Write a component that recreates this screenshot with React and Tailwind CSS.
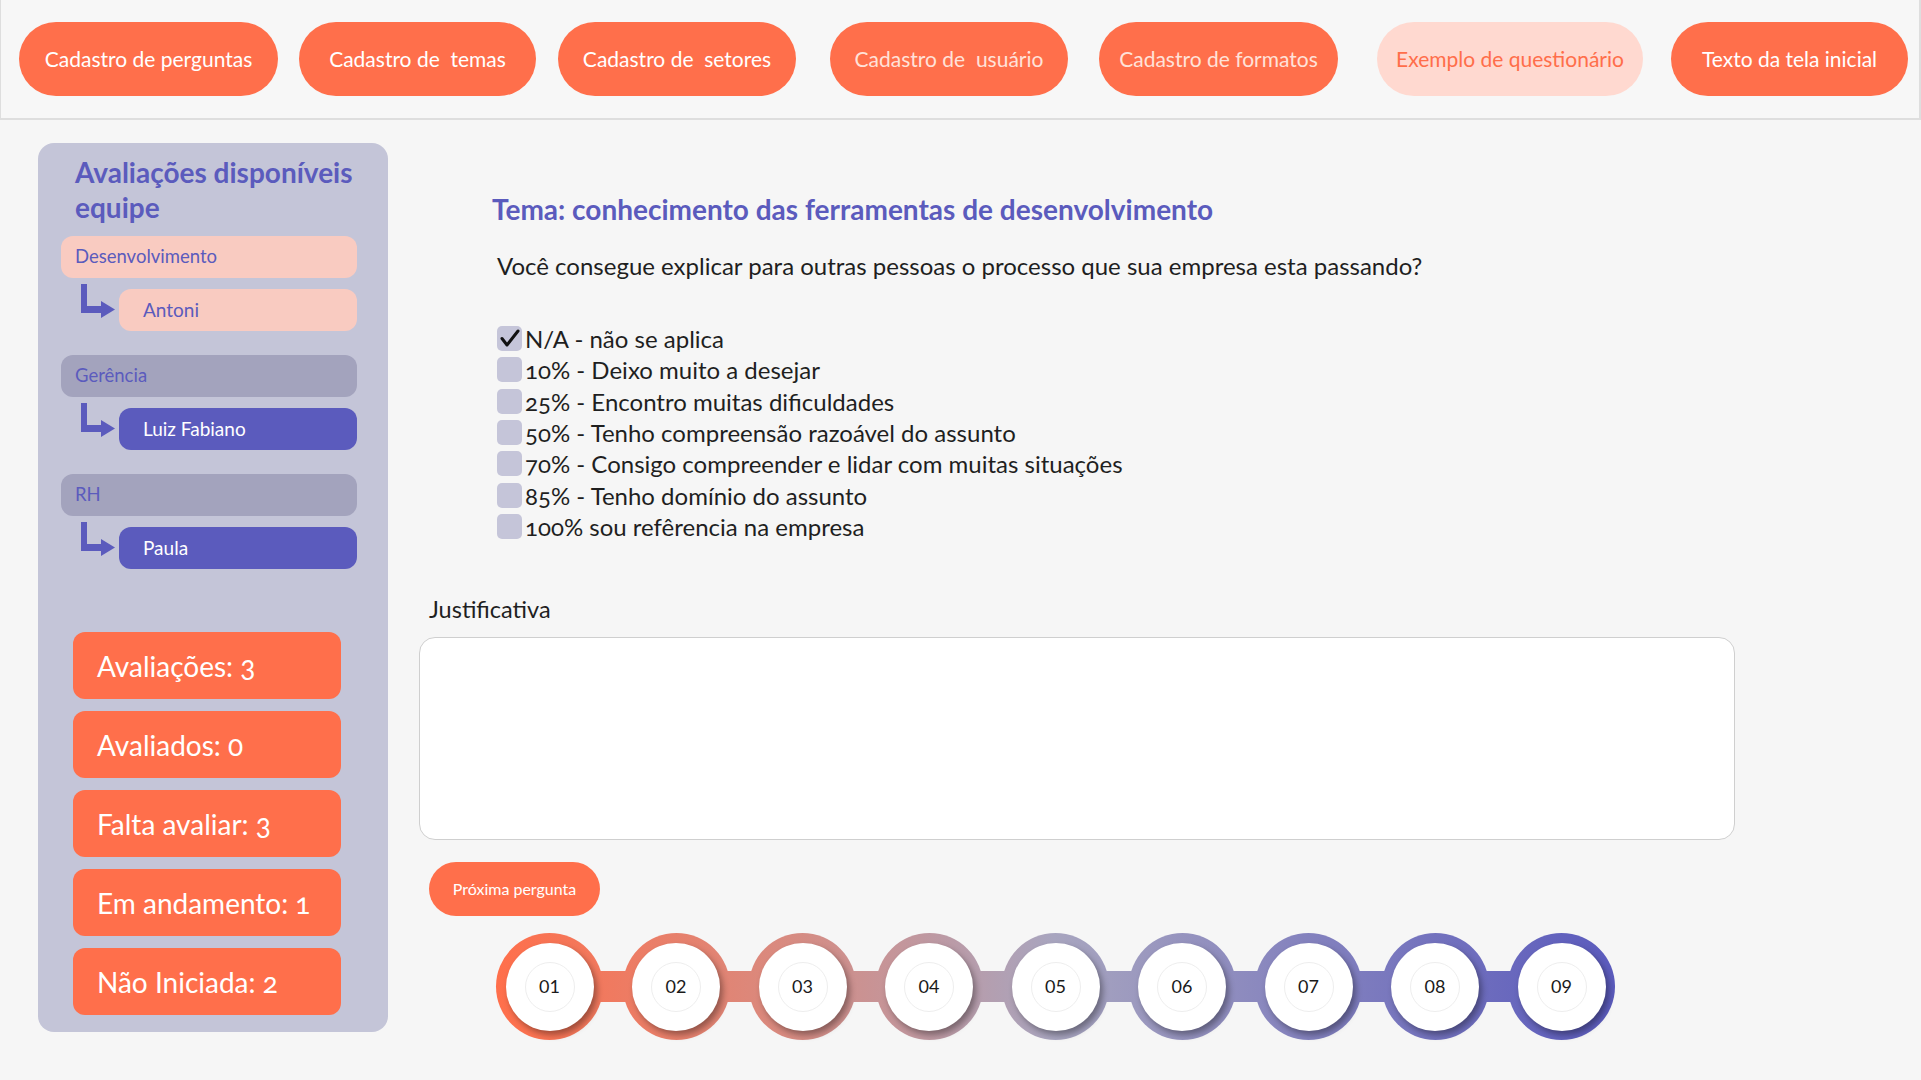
import React from "react";

const FONT = "font-['Lato','Open_Sans',sans-serif]";

const topButtons = [
  { label: "Cadastro de perguntas", w: "w-[259px]", ml: "ml-[18px]", tone: "solid" },
  { label: "Cadastro de  temas", w: "w-[237px]", ml: "ml-[21px]", tone: "solid" },
  { label: "Cadastro de  setores", w: "w-[238px]", ml: "ml-[22px]", tone: "solid" },
  { label: "Cadastro de  usuário", w: "w-[238px]", ml: "ml-[34px]", tone: "soft" },
  { label: "Cadastro de formatos", w: "w-[239px]", ml: "ml-[31px]", tone: "soft" },
  { label: "Exemplo de questionário", w: "w-[266px]", ml: "ml-[39px]", tone: "light" },
  { label: "Texto da tela inicial", w: "w-[237px]", ml: "ml-[28px]", tone: "solid" },
];

const groups = [
  { dept: "Desenvolvimento", person: "Antoni", active: true },
  { dept: "Gerência", person: "Luiz Fabiano", active: false },
  { dept: "RH", person: "Paula", active: false },
];

const stats = [
  "Avaliações: 3",
  "Avaliados: 0",
  "Falta avaliar: 3",
  "Em andamento: 1",
  "Não Iniciada: 2",
];

const options = [
  { label: "N/A - não se aplica", checked: true },
  { label: "10% - Deixo muito a desejar" },
  { label: "25% - Encontro muitas dificuldades" },
  { label: "50% - Tenho compreensão razoável do assunto" },
  { label: "70% - Consigo compreender e lidar com muitas situações" },
  { label: "85% - Tenho domínio do assunto" },
  { label: "100% sou refêrencia na empresa" },
];

const steps = ["01", "02", "03", "04", "05", "06", "07", "08", "09"];

// one gradient shared by the whole chain (fixed to the viewport so it runs across all rings)
const chainBg =
  "bg-fixed bg-[linear-gradient(90deg,#ff6f4b_496px,#d98a7f_780px,#a8a5bf_1054px,#8583be_1300px,#5b5bbd_1615px)]";

export default function App() {
  return (
    <div className={`min-h-screen bg-[#f6f6f6] ${FONT} oldstyle-nums`}>
      {/* ======================
          TOP MENU
      ====================== */}
      <header className="h-[120px] bg-[#f7f7f7] border-l border-r-2 border-b-2 border-[#dedede] flex items-center">
        {topButtons.map((b) => (
          <button
            key={b.label}
            className={`${b.w} ${b.ml} h-[74px] shrink-0 rounded-full text-[21px] whitespace-pre ${
              b.tone === "light"
                ? "bg-[#ffd9d0] text-[#ff6e4a]"
                : b.tone === "soft"
                ? "bg-[#ff6f4b] text-[#ffe2d9]"
                : "bg-[#ff6f4b] text-white"
            }`}
          >
            {b.label}
          </button>
        ))}
      </header>

      <div className="flex pt-[23px]">
        {/* ======================
            SIDEBAR
        ====================== */}
        <aside className="ml-[38px] w-[350px] h-[889px] shrink-0 rounded-[16px] bg-[#c4c5d8] pt-[12px]">
          <h2 className="pl-[37px] pr-[20px] text-[28px] leading-[35px] font-bold text-[#5b5bbd]">
            Avaliações disponíveis equipe
          </h2>

          <div className="mt-[11px] ml-[23px] w-[296px]">
            {groups.map((g, i) => (
              <div key={g.dept} className={i > 0 ? "mt-[24px]" : ""}>
                <div
                  className={`h-[42px] rounded-[12px] flex items-center pl-[14px] text-[18.5px] text-[#5b5bbd] ${
                    g.active ? "bg-[#f9cbc1]" : "bg-[#a3a3bd]"
                  }`}
                >
                  {g.dept}
                </div>
                <div className="mt-[11px] flex items-start">
                  <svg
                    width="36"
                    height="34"
                    viewBox="0 0 36 34"
                    className="ml-[19px] -mt-[5px] shrink-0"
                  >
                    <path d="M1 0H7V22H22V29H1Z" fill="#5b5bbd" />
                    <path d="M21 17L35 25.5L21 34Z" fill="#5b5bbd" />
                  </svg>
                  <div
                    className={`ml-[3px] flex-1 h-[42px] rounded-[12px] flex items-center pl-[24px] text-[19px] ${
                      g.active
                        ? "bg-[#f9cbc1] text-[#5b5bbd]"
                        : "bg-[#5b5bbd] text-white"
                    }`}
                  >
                    {g.person}
                  </div>
                </div>
              </div>
            ))}
          </div>

          <div className="mt-[63px] ml-[35px] w-[268px] flex flex-col gap-[12px]">
            {stats.map((s) => (
              <div
                key={s}
                className="h-[67px] rounded-[12px] bg-[#ff6f4b] flex items-center pl-[24px] text-[28px] text-white"
              >
                {s}
              </div>
            ))}
          </div>
        </aside>

        {/* ======================
            QUESTION
        ====================== */}
        <main className="ml-[31px] w-[1316px] text-[#1f1f1f]">
          <h1 className="mt-[51px] pl-[73px] text-[28px] leading-[30px] font-bold text-[#5b5bbd]">
            Tema: conhecimento das ferramentas de desenvolvimento
          </h1>

          <p className="mt-[27px] pl-[78px] text-[24px] leading-[30px]">
            Você consegue explicar para outras pessoas o processo que sua empresa esta passando?
          </p>

          <ul className="mt-[42px] pl-[78px]">
            {options.map((o) => (
              <li key={o.label} className="h-[31.33px] flex items-center gap-[3px] text-[24px]">
                <span className="w-[25px] h-[25px] rounded-[5px] bg-[#c5c5d9] flex items-center justify-center shrink-0">
                  {o.checked && (
                    <svg width="25" height="25" viewBox="0 0 25 25">
                      <path
                        d="M5 12.5L10 19L21 5"
                        fill="none"
                        stroke="#111"
                        strokeWidth="3"
                        strokeLinecap="round"
                        strokeLinejoin="round"
                      />
                    </svg>
                  )}
                </span>
                <span className="leading-[31px]">{o.label}</span>
              </li>
            ))}
          </ul>

          <p className="mt-[53px] pl-[10px] text-[23.5px] leading-[28px]">Justificativa</p>

          <textarea className="mt-[14px] block w-[1316px] h-[203px] rounded-[16px] border border-[#cfcfcf] bg-white resize-none outline-none" />

          <button className="mt-[22px] ml-[10px] w-[171px] h-[54px] rounded-full bg-[#ff6f4b] text-white text-[16px]">
            Próxima pergunta
          </button>

          {/* step chain */}
          <div className="mt-[17px] ml-[77px] relative flex gap-[19.5px] w-max">
            <div className={`absolute left-[53px] right-[53px] top-[38px] h-[31px] ${chainBg}`} />
            {steps.map((n) => (
              <div
                key={n}
                className={`relative w-[107px] h-[107px] rounded-full flex items-center justify-center ${chainBg}`}
              >
                <div className="w-[88px] h-[88px] rounded-full bg-white shadow-[3px_4px_6px_rgba(0,0,0,0.35)] flex items-center justify-center">
                  <div className="w-[50px] h-[50px] rounded-full border border-[#eeeeee] flex items-center justify-center text-[18px] text-[#1a1a1a] lining-nums">
                    {n}
                  </div>
                </div>
              </div>
            ))}
          </div>
        </main>
      </div>
    </div>
  );
}
